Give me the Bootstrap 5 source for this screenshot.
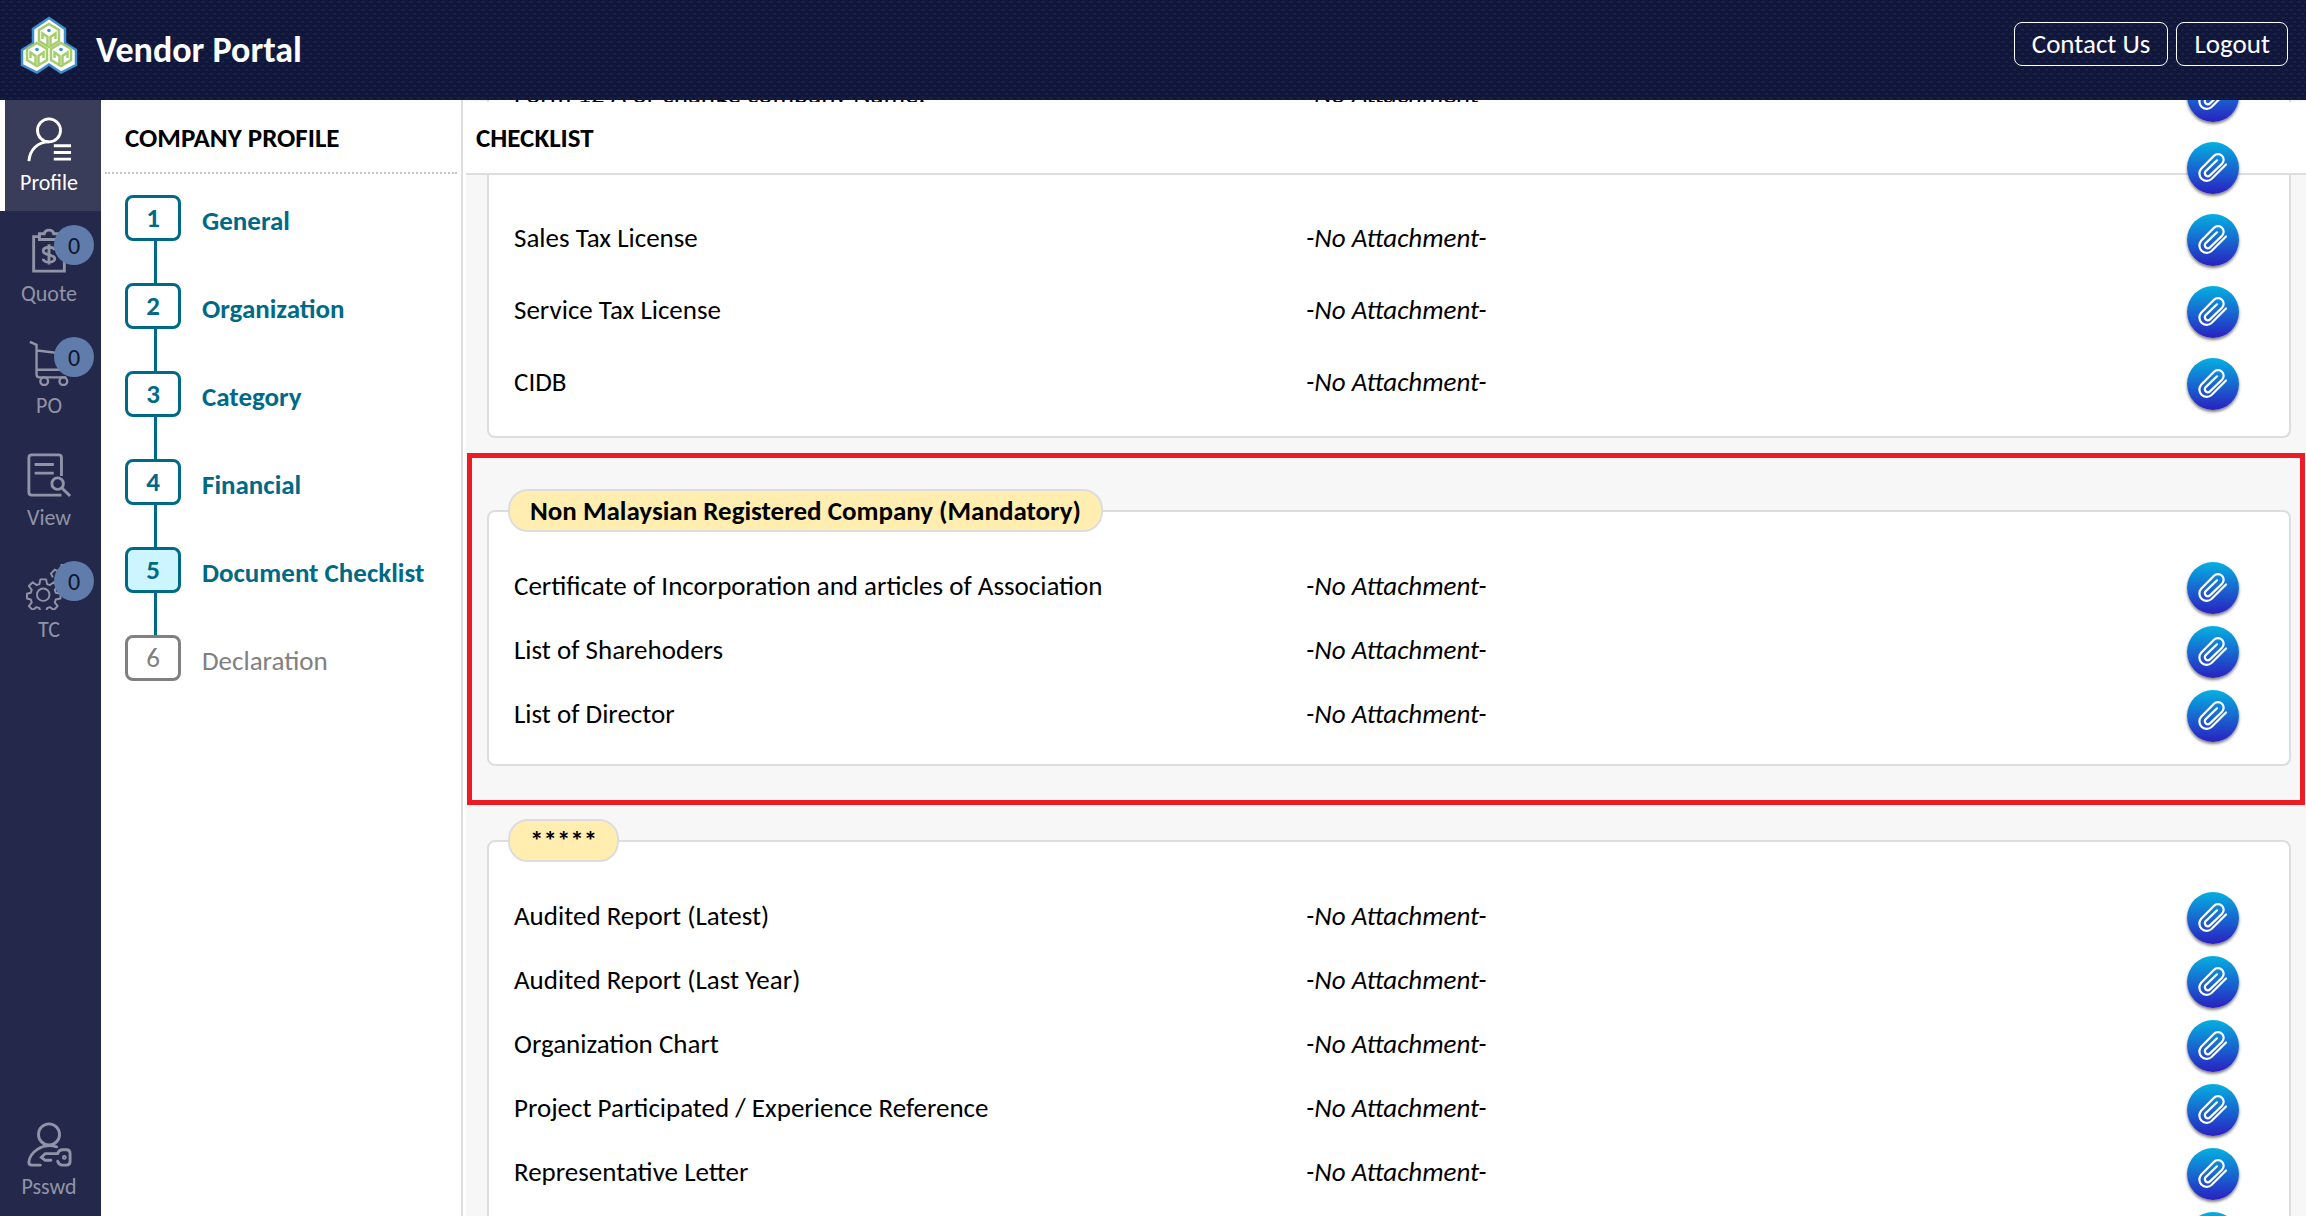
<!DOCTYPE html>
<html lang="en">
<head>
<meta charset="utf-8">
<meta name="viewport" content="width=device-width, initial-scale=1">
<title>Vendor Portal</title>
<link href="https://cdn.jsdelivr.net/npm/bootstrap@5.3.0/dist/css/bootstrap.min.css" rel="stylesheet">
<style>
body{font-family:Carlito,Lato,sans-serif;font-size:27px;line-height:32px;color:#000;background:#fff}
.topbar{height:100px;padding-left:20px;padding-right:18px;background-color:#11173a;background-image:radial-gradient(ellipse 3px 1px at 3px 2px,#1a2146 60%,transparent),radial-gradient(ellipse 3px 1px at 7px 6px,#1a2146 60%,transparent);background-size:8px 8px}
.brand-link{gap:18px}
.brand-link svg{margin-bottom:10px}
.brand-name{font-size:36px;line-height:40px}
.top-actions{padding-top:22px}
.top-btn{font-size:27px;line-height:32px;padding:5px 17px;border:1px solid #fff;border-radius:8px;color:#fff}
.rail{width:101px;background:#24294c}
.rail-link{height:112px;padding-top:17px;color:#9194a6;font-size:22px;line-height:24px;border-left:5px solid transparent;padding-right:8px;text-decoration:none}
.rail-link svg{width:46px;height:46px;margin-bottom:8px}
.rail-link.active{height:111px;color:#fff;background:#3a3d59;border-left-color:#fff}
.count{left:49px;top:14px;width:40px;height:40px;border-radius:50%;background:#5f7cab;color:#10142b;font-size:24px;line-height:42px}
.steps{width:362px;border-right:2px solid #ddd}
.panel-title{height:73px;font-size:27px}
.steps .panel-title{height:74px;margin:0 4px;padding:4px 0 0 20px;border-bottom:2px dotted #c4c4c4}
.step-list{padding-top:21px}
.step{height:88px;margin-left:24px;gap:21px;color:#006a86;text-decoration:none;background:linear-gradient(#006a86,#006a86) 29px 0/3px 100% no-repeat}
.step-no{width:56px;height:46px;border:3px solid currentColor;border-radius:8px;line-height:40px;background:#fff}
.step-name{padding-top:10px}
.step.current .step-no{background:#ccf5ff}
.step.later{color:#808080;background:none}
.board{background:#f7f7f7;border-left:3px solid #fff;padding-right:1px}
.board-head{top:2px;z-index:1;background:#fff;border-bottom:2px solid #ddd;height:73px;padding:2px 0 0 10px}
.group{background:#fff;border:2px solid #ddd;border-radius:8px;margin:0 14px 0 21px}
.group.scrolled{margin-top:-40px;padding-bottom:16px;border-top:0;border-top-left-radius:0;border-top-right-radius:0}
.doc{height:64px;padding-left:25px;padding-right:50px}
.scrolled .doc{height:72px}
.doc-name{width:792px;padding-bottom:5px}
.doc-file{padding-bottom:5px}
.clip-btn{z-index:2;width:52px;height:52px;border:0;border-radius:50%;color:#fff;background:linear-gradient(#04b0e0,#1570d2 45%,#2a20c0);box-shadow:0 2px 3px rgba(0,0,0,.5)}
.clip-btn svg{width:32px;height:32px}
.marked{margin:15px 0 0 1px;border:5px solid #ed1c24}
.marked .group{margin:52px 9px 34px 15px;padding-bottom:16px}
.pill{margin:-23px 0 24px 19px;padding:0 20px;border:2px solid #ddd;border-radius:20px;background:#ffeeb0;font-size:27px;line-height:39px}
.last-group{margin-top:35px}
</style>
<script src="https://cdn.jsdelivr.net/npm/bootstrap@5.3.0/dist/js/bootstrap.bundle.min.js"></script>
</head>
<body class="vh-100 overflow-hidden d-flex flex-column">
<svg class="d-none" aria-hidden="true">
  <symbol id="clip" viewBox="0 0 32 32"><path d="M29 12.500 14.500 27a7.300 7.300 0 0 1-10.300-10.300L17 3.700a5.600 5.600 0 0 1 8 8L13 23.400a3 3 0 0 1-4.300-4.300L20 8.300" fill="none" stroke="currentColor" stroke-width="2.200" stroke-linecap="round"/></symbol>
</svg>
<header class="topbar flex-shrink-0 d-flex justify-content-between">
  <a href="#" class="brand-link d-flex align-items-center text-white text-decoration-none">
    <svg width="58" height="58" viewBox="0 0 58 58" aria-hidden="true">
      <path d="M29 2 45 13V27l11 7v15L41 56.500 29 48.500 17 56.500 2 49V34l11-7V13Z" fill="#fff" stroke="#3d8fd1" stroke-width="2.500"/>
      <g id="cell" fill="none" stroke="#a5cd6b" stroke-width="2.500"><path d="M29 8 39 14v11L29 31l-10-6v-11ZM27.500 29V21l-5-3.500V23M30.500 29V21l5-3.500V23"/><circle cx="29" cy="14.500" r="1.800" fill="#3d8fd1" stroke="none"/></g>
      <use href="#cell" x="-12" y="19"/><use href="#cell" x="12" y="19"/>
    </svg>
    <span class="brand-name fw-bold">Vendor Portal</span>
  </a>
  <div class="top-actions d-flex align-items-start gap-2">
    <button type="button" class="btn top-btn">Contact Us</button>
    <button type="button" class="btn top-btn">Logout</button>
  </div>
</header>
<div class="flex-grow-1 d-flex overflow-hidden">
  <nav class="rail flex-shrink-0 d-flex flex-column" aria-label="Main">
    <a href="#" class="rail-link active d-flex flex-column align-items-center"><svg viewBox="0 0 48 48" fill="none" stroke="currentColor" stroke-width="3"><circle cx="24" cy="14" r="12"/><path d="M3 46C4 34 12 26 24 26M29 30h18M29 37h18M29 44h18"/></svg>Profile</a>
    <a href="#" class="rail-link position-relative d-flex flex-column align-items-center"><svg viewBox="0 0 48 48" fill="none" stroke="currentColor" stroke-width="3"><path d="M14 9H8v36h32V9h-6M14 12V6h5c1-5 9-5 10 0h5v6ZM30 23c-1-4-12-4-12 1s12 3 12 8-12 5-12 0M24 17v21"/></svg>Quote<span class="count position-absolute text-center">0</span></a>
    <a href="#" class="rail-link position-relative d-flex flex-column align-items-center"><svg viewBox="0 0 48 48" fill="none" stroke="currentColor" stroke-width="2.500"><path d="M4 2l7 3v31c0 2 1 3 3 3h28M12 11l32 4-4 16H12"/><circle cx="19" cy="43" r="4"/><circle cx="39" cy="43" r="4"/></svg>PO<span class="count position-absolute text-center">0</span></a>
    <a href="#" class="rail-link d-flex flex-column align-items-center"><svg viewBox="0 0 48 48" fill="none" stroke="currentColor" stroke-width="3"><path d="M37 25V6c0-2-1-3-3-3H6C4 3 3 4 3 6v36c0 2 1 3 3 3h31M9 13h20M9 22h20M38 38l8 8"/><circle cx="33" cy="33" r="6"/></svg>View</a>
    <a href="#" class="rail-link position-relative d-flex flex-column align-items-center"><svg viewBox="0 0 48 48" fill="none" stroke="currentColor" stroke-width="2"><path d="M14 18h6l1 5 3 1 4-3 4 4-3 4 1 3 5 1v5l-5 1-1 3 3 4-4 4-4-3-3 1-1 4h-6l-1-4-3-1-4 3-4-4 3-4-1-3-4-1v-5l4-1 1-3-3-4 4-4 4 3 3-1Z" transform="translate(1 -2)" stroke-linejoin="round"/><circle cx="18" cy="32" r="6.500"/><path d="M28 14l-2-4 4-4 4 2 3-2V1h8"/></svg>TC<span class="count position-absolute text-center">0</span></a>
    <a href="#" class="rail-link mt-auto d-flex flex-column align-items-center"><svg viewBox="0 0 48 48" fill="none" stroke="currentColor" stroke-width="3" stroke-linecap="round"><circle cx="24" cy="14" r="11"/><path d="M32 27C17 22 4 33 3 43c0 2 1 3 3 3h9M26 41h-6l-4-3 4-4h13c1-3 2-4 5-4h4c3 0 4 2 4 4v8c0 3-2 4-4 4h-4c-3 0-4-1-5-4"/><circle cx="40" cy="38" r="1"/></svg>Psswd</a>
  </nav>
  <aside class="steps flex-shrink-0">
    <h1 class="panel-title fw-bold d-flex align-items-center">COMPANY PROFILE</h1>
    <div class="step-list fw-bold">
      <a href="#" class="step d-flex align-items-start"><span class="step-no text-center">1</span><span class="step-name">General</span></a>
      <a href="#" class="step d-flex align-items-start"><span class="step-no text-center">2</span><span class="step-name">Organization</span></a>
      <a href="#" class="step d-flex align-items-start"><span class="step-no text-center">3</span><span class="step-name">Category</span></a>
      <a href="#" class="step d-flex align-items-start"><span class="step-no text-center">4</span><span class="step-name">Financial</span></a>
      <a href="#" class="step current d-flex align-items-start"><span class="step-no text-center">5</span><span class="step-name">Document Checklist</span></a>
      <a href="#" class="step later fw-normal d-flex align-items-start"><span class="step-no text-center">6</span><span class="step-name">Declaration</span></a>
    </div>
  </aside>
  <main class="board flex-grow-1 position-relative overflow-hidden">
    <h2 class="board-head panel-title position-absolute start-0 end-0 mb-0 fw-bold d-flex align-items-center">CHECKLIST</h2>
    <section class="group scrolled">
      <div class="doc d-flex align-items-center"><span class="doc-name">Form 12 A or change company Name.</span><em class="doc-file">-No Attachment-</em><button type="button" class="clip-btn position-relative ms-auto p-0 d-flex align-items-center justify-content-center" aria-label="Attach"><svg><use href="#clip"/></svg></button></div>
      <div class="doc d-flex align-items-center"><button type="button" class="clip-btn position-relative ms-auto p-0 d-flex align-items-center justify-content-center" aria-label="Attach"><svg><use href="#clip"/></svg></button></div>
      <div class="doc d-flex align-items-center"><span class="doc-name">Sales Tax License</span><em class="doc-file">-No Attachment-</em><button type="button" class="clip-btn position-relative ms-auto p-0 d-flex align-items-center justify-content-center" aria-label="Attach"><svg><use href="#clip"/></svg></button></div>
      <div class="doc d-flex align-items-center"><span class="doc-name">Service Tax License</span><em class="doc-file">-No Attachment-</em><button type="button" class="clip-btn position-relative ms-auto p-0 d-flex align-items-center justify-content-center" aria-label="Attach"><svg><use href="#clip"/></svg></button></div>
      <div class="doc d-flex align-items-center"><span class="doc-name">CIDB</span><em class="doc-file">-No Attachment-</em><button type="button" class="clip-btn position-relative ms-auto p-0 d-flex align-items-center justify-content-center" aria-label="Attach"><svg><use href="#clip"/></svg></button></div>
    </section>
    <div class="marked overflow-hidden">
      <section class="group">
        <h3 class="pill d-table fw-bold">Non Malaysian Registered Company (Mandatory)</h3>
        <div class="doc d-flex align-items-center"><span class="doc-name">Certificate of Incorporation and articles of Association</span><em class="doc-file">-No Attachment-</em><button type="button" class="clip-btn position-relative ms-auto p-0 d-flex align-items-center justify-content-center" aria-label="Attach"><svg><use href="#clip"/></svg></button></div>
        <div class="doc d-flex align-items-center"><span class="doc-name">List of Sharehoders</span><em class="doc-file">-No Attachment-</em><button type="button" class="clip-btn position-relative ms-auto p-0 d-flex align-items-center justify-content-center" aria-label="Attach"><svg><use href="#clip"/></svg></button></div>
        <div class="doc d-flex align-items-center"><span class="doc-name">List of Director</span><em class="doc-file">-No Attachment-</em><button type="button" class="clip-btn position-relative ms-auto p-0 d-flex align-items-center justify-content-center" aria-label="Attach"><svg><use href="#clip"/></svg></button></div>
      </section>
    </div>
    <section class="group last-group">
      <h3 class="pill d-table fw-bold">*****</h3>
      <div class="doc d-flex align-items-center"><span class="doc-name">Audited Report (Latest)</span><em class="doc-file">-No Attachment-</em><button type="button" class="clip-btn position-relative ms-auto p-0 d-flex align-items-center justify-content-center" aria-label="Attach"><svg><use href="#clip"/></svg></button></div>
      <div class="doc d-flex align-items-center"><span class="doc-name">Audited Report (Last Year)</span><em class="doc-file">-No Attachment-</em><button type="button" class="clip-btn position-relative ms-auto p-0 d-flex align-items-center justify-content-center" aria-label="Attach"><svg><use href="#clip"/></svg></button></div>
      <div class="doc d-flex align-items-center"><span class="doc-name">Organization Chart</span><em class="doc-file">-No Attachment-</em><button type="button" class="clip-btn position-relative ms-auto p-0 d-flex align-items-center justify-content-center" aria-label="Attach"><svg><use href="#clip"/></svg></button></div>
      <div class="doc d-flex align-items-center"><span class="doc-name">Project Participated / Experience Reference</span><em class="doc-file">-No Attachment-</em><button type="button" class="clip-btn position-relative ms-auto p-0 d-flex align-items-center justify-content-center" aria-label="Attach"><svg><use href="#clip"/></svg></button></div>
      <div class="doc d-flex align-items-center"><span class="doc-name">Representative Letter</span><em class="doc-file">-No Attachment-</em><button type="button" class="clip-btn position-relative ms-auto p-0 d-flex align-items-center justify-content-center" aria-label="Attach"><svg><use href="#clip"/></svg></button></div>
      <div class="doc d-flex align-items-center"><button type="button" class="clip-btn position-relative ms-auto p-0 d-flex align-items-center justify-content-center" aria-label="Attach"><svg><use href="#clip"/></svg></button></div>
    </section>
  </main>
</div>
</body>
</html>
